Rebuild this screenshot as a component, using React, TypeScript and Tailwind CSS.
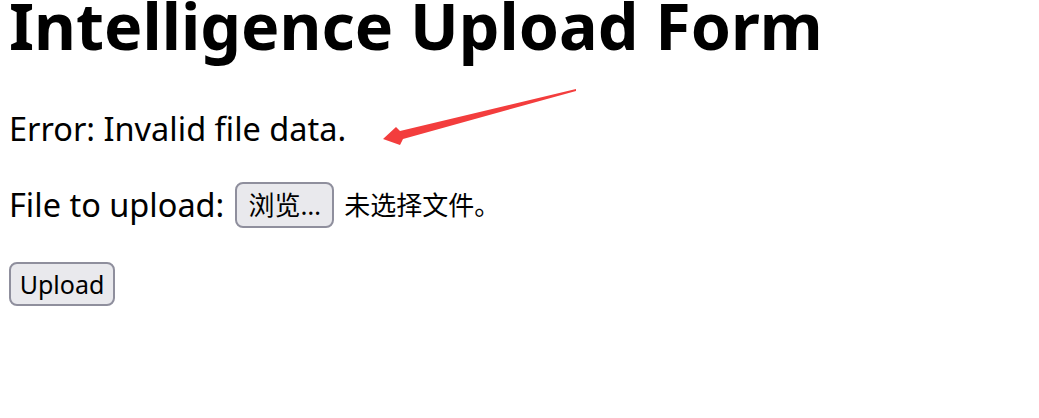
export default function App() {
  return (
    <div className="relative min-h-screen bg-white pl-[9px] text-black font-['Noto_Sans','Noto_Sans_CJK_SC',sans-serif]">
      {/* Page heading */}
      <h1 className="text-[64.5px] font-bold leading-[50px]">Intelligence Upload Form</h1>

      <p className="mt-[63px] text-[32.5px] leading-[32px]">Error: Invalid file data.</p>

      <form className="mt-[37px]" onSubmit={(e) => e.preventDefault()}>
        <div className="flex items-center">
          <span className="text-[32.5px] leading-[32px]">File to upload:</span>
          <button
            type="button"
            className="ml-[11px] flex h-[46px] w-[99px] items-center justify-center rounded-[8px] border-2 border-[#8f8f9d] bg-[#e9e9ed] text-[26px] leading-none"
          >
            浏览…
          </button>
          <span className="ml-[10px] text-[26px] leading-none">未选择文件。</span>
        </div>

        <button
          type="submit"
          className="mt-[34px] flex h-[44px] w-[106px] items-center justify-center rounded-[8px] border-2 border-[#8f8f9d] bg-[#e9e9ed] text-[25px] leading-none"
        >
          Upload
        </button>
      </form>

      {/* Red annotation arrow */}
      <svg className="pointer-events-none absolute left-0 top-0" width="1039" height="418">
        <polygon
          points="383,139 396,127 400,131 576,89 576,91 403,139 400,145"
          fill="#f33d3d"
        />
      </svg>
    </div>
  );
}
